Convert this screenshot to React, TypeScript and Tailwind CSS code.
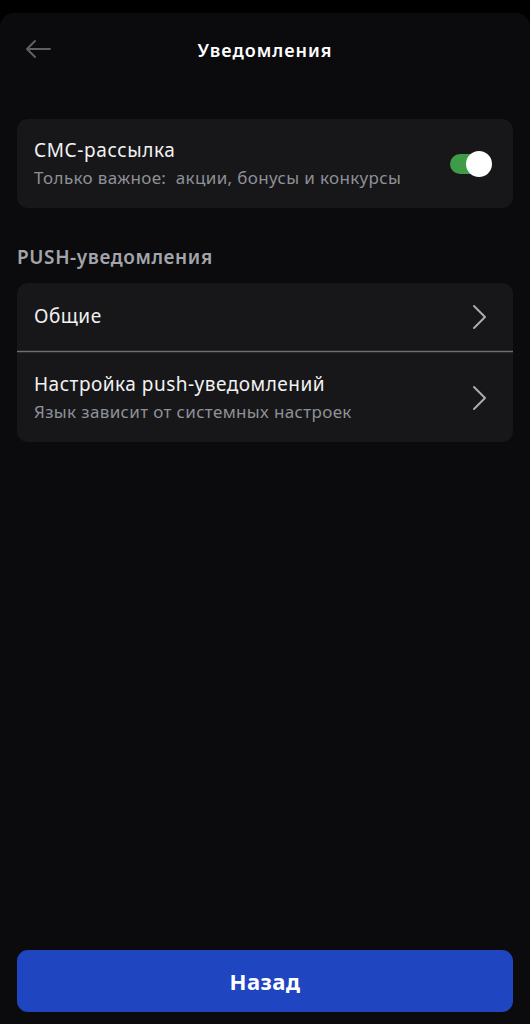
import React from 'react';

const font = { fontFamily: '"Noto Sans", "Open Sans", sans-serif' };

const Chevron = () => (
  <svg width="16" height="26" viewBox="0 0 16 26" fill="none" className="shrink-0">
    <path d="M2 2l11 11L2 24" stroke="#a9abb0" strokeWidth="2" strokeLinecap="round" strokeLinejoin="round" />
  </svg>
);

const Toggle = () => (
  <div className="relative h-[26px] w-[42px] shrink-0">
    <div className="absolute left-0 top-[3px] h-[20px] w-[34px] rounded-full bg-[#3f9b48]" />
    <div className="absolute right-0 top-0 h-[26px] w-[26px] rounded-full bg-white" />
  </div>
);

const App = () => {
  return (
    <div className="min-h-[1024px] bg-black pt-[13px] text-white" style={font}>
      <div className="flex min-h-[1011px] flex-col rounded-t-[14px] bg-[#0b0b0d] px-[17px]">
        <header className="relative flex h-[72px] items-center justify-center">
          <svg
            width="26"
            height="20"
            viewBox="0 0 26 20"
            fill="none"
            className="absolute left-[8px] top-[26px]"
          >
            <path d="M25 10H2M10 2L2 10l8 8" stroke="#5e6066" strokeWidth="2" strokeLinecap="round" strokeLinejoin="round" />
          </svg>
          <h1 className="pt-[2px] text-[18px] font-semibold tracking-[1px]">Уведомления</h1>
        </header>

        <div className="mt-[34px] flex h-[89px] items-center justify-between rounded-[11px] bg-[#17171a] pl-[17px] pr-[21px]">
          <div className="flex flex-col">
            <span className="text-[19px] leading-[24px] tracking-[0.6px] text-[#f2f2f2]">СМС-рассылка</span>
            <span className="mt-[5px] text-[17px] leading-[22px] tracking-[0.35px] text-[#8e9096]">
              Только важное:&nbsp; акции, бонусы и конкурсы
            </span>
          </div>
          <Toggle />
        </div>

        <h2 className="mt-[37px] text-[19px] font-semibold leading-[24px] tracking-[0.6px] text-[#a3a5ab]">
          PUSH-уведомления
        </h2>

        <div className="mt-[14px] overflow-hidden rounded-[11px] bg-[#17171a]">
          <div className="flex h-[67px] items-center justify-between pl-[17px] pr-[25px]">
            <span className="text-[19px] tracking-[0.5px] text-[#f2f2f2]">Общие</span>
            <Chevron />
          </div>
          <div className="h-[3px] border-y border-[#2a2b2f] bg-[#6c6f76]" />
          <div className="flex h-[89px] items-center justify-between pl-[17px] pr-[25px]">
            <div className="flex flex-col">
              <span className="text-[19px] leading-[24px] tracking-[0.5px] text-[#f2f2f2]">
                Настройка push-уведомлений
              </span>
              <span className="mt-[5px] text-[17px] leading-[22px] tracking-[0.35px] text-[#8e9096]">
                Язык зависит от системных настроек
              </span>
            </div>
            <Chevron />
          </div>
        </div>

        <div className="flex-1" />

        <button className="mb-[12px] h-[62px] w-full rounded-[11px] bg-[#1f45c1] text-[22px] font-bold tracking-[0.5px] text-white">
          Назад
        </button>
      </div>
    </div>
  );
};

export default App;
